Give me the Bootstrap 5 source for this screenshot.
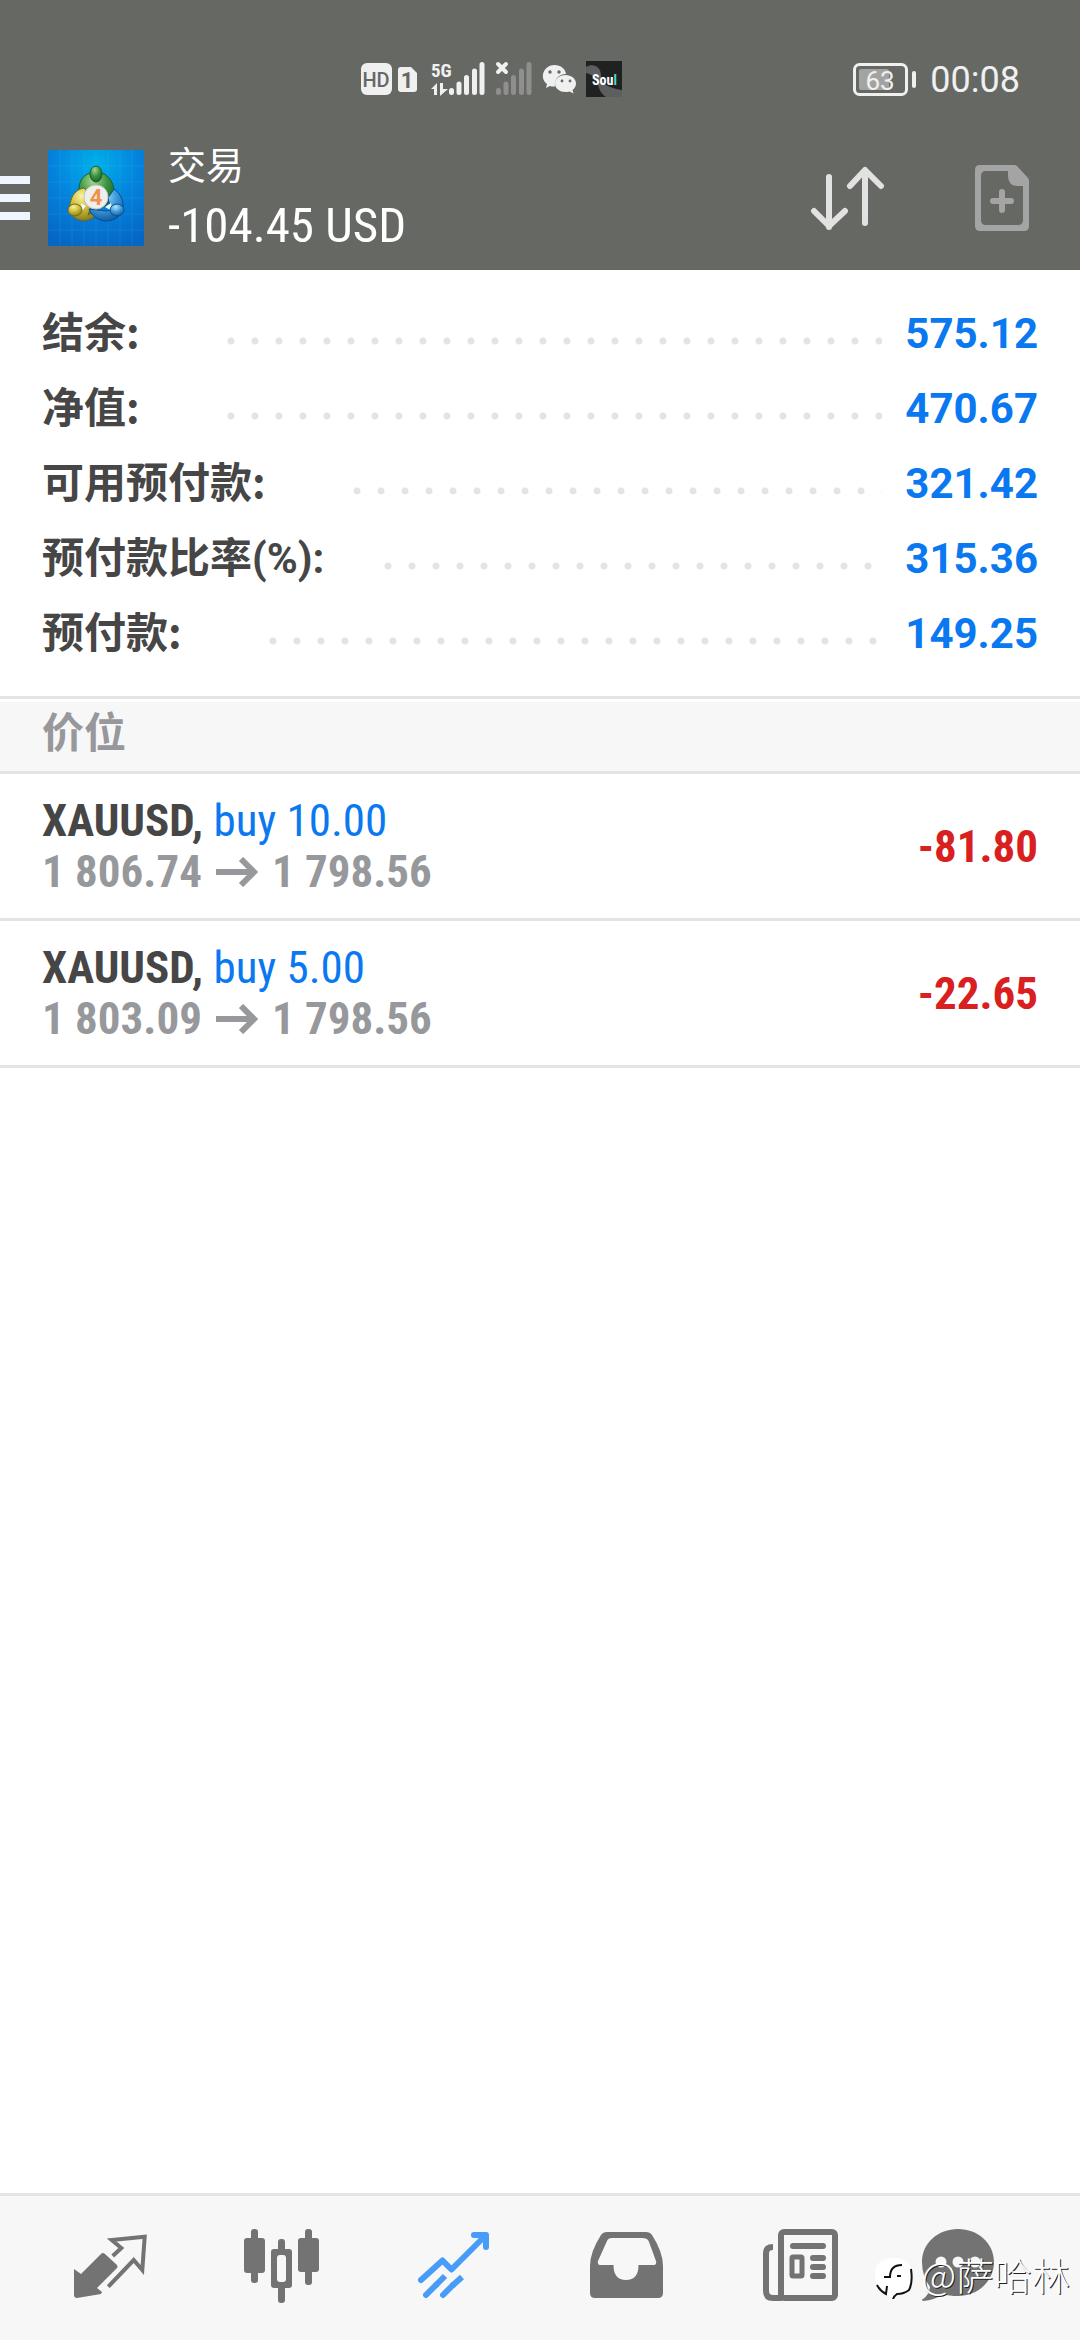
<!DOCTYPE html>
<html lang="zh-CN">
<head>
<meta charset="utf-8">
<meta name="viewport" content="width=device-width, initial-scale=1">
<title>交易</title>
<link href="https://cdn.jsdelivr.net/npm/bootstrap@5.3.0/dist/css/bootstrap.min.css" rel="stylesheet">
<style>
  body { font-family: Roboto, "Noto Sans CJK SC", sans-serif; color: #464646; background: #fff; }
  .narrow { font-family: "Roboto Condensed", "Liberation Sans Narrow", Roboto, "Noto Sans CJK SC", sans-serif; }
  .app-head { background: #666864; color: #fff; }
  .status-bar { height: 120px; padding: 40px 60px 0 340px; color: #f0f0f0; }
  .clock { font-size: 36px; line-height: 80px; }
  .tool-bar { padding: 18px 51px 12px 0; }
  .plain-btn { border: 0; background: none; padding: 0; line-height: 0; }
  .menu-btn { margin-right: 18px; }
  .brand-logo { margin-right: 24px; }
  .head-title { font-size: 38px; line-height: 56px; font-weight: 400; margin: 0; }
  .head-sum { font-size: 49px; line-height: 64px; }
  .head-actions { gap: 90px; }
  .account { padding: 26px 42px 25px; border-bottom: 3px solid #e4e4e4; margin: 0 0 3px; }
  .account-row { font-size: 42px; line-height: 75px; font-weight: 700; }
  .account-row dt { font-family: "Noto Sans CJK SC", sans-serif; line-height: 60px; margin-right: 87px; }
  .account-row.level-row dt { font-family: Roboto, "Noto Sans CJK SC", sans-serif; margin-right: 60px; }
  .account-row dd { margin: 0; color: #0a78f0; }
  .leader { height: 8px; margin: 15px 23px 0 0; background: radial-gradient(circle at 4px 4px, #e4e4e4 3px, transparent 4px) 0 0 / 24px 8px repeat-x; }
  .section-head { background: #f7f7f7; color: #97989c; font-size: 42px; line-height: 56px; font-weight: 700; font-family: "Noto Sans CJK SC", sans-serif; padding: 0 42px 13px; margin: 0; border-bottom: 3px solid #e4e4e4; }
  .deal { padding: 21px 42px; border: 0; border-bottom: 3px solid #e4e4e4; font-size: 45px; line-height: 51px; font-weight: 700; color: #464646; }
  .deal .side { color: #0a78f0; font-weight: 400; }
  .deal .prices { color: #97989c; gap: 14px; }
  .deal .loss { color: #d82020; }
  .tab-bar { background: #f7f7f7; border-top: 3px solid #e4e4e4; height: 147px; color: #737373; }
  .tab-bar a { color: inherit; line-height: 0; }
  .tab-bar a.active { color: #479cf7; }
  .watermark { right: 10px; bottom: 41px; gap: 4px; color: #fff; font: 300 38px/44px "Noto Sans CJK SC", sans-serif; text-shadow: 1px 1px 0 #222; }
</style>
<script src="https://cdn.jsdelivr.net/npm/bootstrap@5.3.0/dist/js/bootstrap.bundle.min.js"></script>
</head>
<body class="d-flex flex-column min-vh-100">

<header class="app-head">
  <div class="status-bar d-flex justify-content-between">
    <svg width="300" height="80" viewBox="0 0 300 80" aria-label="状态">
      <rect x="21" y="23" width="31" height="32" rx="6" fill="#f0f0f0"/>
      <text x="36" y="47" text-anchor="middle" font-family="Roboto" font-weight="500" font-size="20" fill="#666864">HD</text>
      <path d="M61 27h10l6 6v16a3 3 0 0 1-3 3H61a3 3 0 0 1-3-3V30a3 3 0 0 1 3-3z" fill="#f0f0f0"/>
      <text x="67" y="48" text-anchor="middle" font-family="Roboto" font-weight="700" font-size="22" fill="#666864">1</text>
      <text class="narrow" x="91" y="37" font-weight="700" font-size="19" fill="#f0f0f0">5G</text>
      <path d="M91 49l6-6v12h-3v-6zM100 43h3v6h5l-8 7z" fill="#f0f0f0"/>
      <g stroke="#f0f0f0" stroke-width="5" stroke-linecap="round"><path d="M111.500 50.500v2M119 44v8.500M126.500 37.500v15M134.500 31v21.500M142 24.500v28"/></g>
      <path d="M158 24l8 8M166 24l-8 8" stroke="#f0f0f0" stroke-width="4" stroke-linecap="round"/>
      <g stroke="#8f908e" stroke-width="5" stroke-linecap="round"><path d="M158.500 50.500v2M166 44v8.500M173.500 37.500v15M181.500 31v21.500M189 24.500v28"/></g>
      <path d="M214.500 25c6.500 0 11 4 11.500 9-7 0-12 5-11 12.500-2 .3-3.500 0-5-.5l-4 2 1-4c-8-6-3.500-19 7.500-19z" fill="#f0f0f0"/>
      <path d="M225.500 35c6 0 10.500 4 10.500 8.500 0 3-1.500 5-3.500 6.500l1 3.500-4-2c-8 2-14.500-2-14.500-8 0-4.500 4.500-8.500 10.500-8.500z" fill="#f0f0f0"/>
      <g fill="#666864"><circle cx="210" cy="32" r="1.700"/><circle cx="219" cy="32" r="1.700"/><circle cx="222" cy="41" r="1.400"/><circle cx="230" cy="41" r="1.400"/></g>
      <rect x="246" y="21" width="36" height="36" fill="#202222"/>
      <path d="M246 27c7-4 15-1 15 9 0 8 8 12 21 14v7h-16c-11-7-5-21-20-24z" fill="#777978" opacity=".7"/>
      <text class="narrow" x="252" y="45" font-weight="700" font-size="14" fill="#fff">Sou<tspan fill="#46dccb">l</tspan></text>
    </svg>
    <div class="d-flex">
      <svg width="77" height="80" viewBox="0 0 77 80" aria-label="电量">
        <rect x="1.500" y="24.500" width="52" height="30" rx="5" fill="none" stroke="#f0f0f0" stroke-width="3"/>
        <rect x="6" y="29" width="30" height="21" rx="2" fill="#a3a4a2"/>
        <rect x="59" y="31" width="4" height="17" rx="2" fill="#f0f0f0"/>
        <text x="27" y="50" text-anchor="middle" font-family="Roboto" font-size="26" fill="#f0f0f0">63</text>
      </svg>
      <span class="clock">00:08</span>
    </div>
  </div>

  <div class="tool-bar d-flex align-items-center">
    <button class="plain-btn menu-btn" type="button" aria-label="菜单">
      <svg width="30" height="44" viewBox="0 0 30 44"><path d="M0 0h30v8H0zM0 18h30v8H0zM0 36h30v8H0z" fill="#f0f6ff"/></svg>
    </button>
    <svg class="brand-logo" width="96" height="96" viewBox="0 0 96 96" aria-hidden="true">
      <defs>
        <radialGradient id="sky" cx=".5" cy=".15" r=".9"><stop offset="0" stop-color="#00b0ea"/><stop offset=".5" stop-color="#0482dd"/><stop offset="1" stop-color="#0566c4"/></radialGradient>
        <radialGradient id="gr" cx=".4" cy=".25" r=".8"><stop offset="0" stop-color="#a4d692"/><stop offset=".5" stop-color="#3c9440"/><stop offset="1" stop-color="#165e28"/></radialGradient>
        <radialGradient id="ye" cx=".4" cy=".25" r=".8"><stop offset="0" stop-color="#f8f3a0"/><stop offset=".5" stop-color="#cdbb35"/><stop offset="1" stop-color="#82761a"/></radialGradient>
        <radialGradient id="bl" cx=".4" cy=".25" r=".8"><stop offset="0" stop-color="#b5e3fa"/><stop offset=".5" stop-color="#3d9bdc"/><stop offset="1" stop-color="#0c559c"/></radialGradient>
      </defs>
      <rect width="96" height="96" fill="url(#sky)"/>
      <path d="M12 0v96M24 0v96M36 0v96M48 0v96M60 0v96M72 0v96M84 0v96M0 16h96M0 32h96M0 48h96M0 64h96M0 80h96" stroke="#5cc4f5" stroke-width="1" opacity=".15"/>
      <path d="M31 39c0-11 8-17 17-17s17 7 18 18c0 9-6 15-13 18l-5-19-10 2-7 3z" fill="url(#gr)" stroke="#17622b"/>
      <path d="M36 38l10 11-6 16 11-6c-2 10-13 14-22 10-7-3-9-10-6-19 2-7 7-11 13-12z" fill="url(#ye)" stroke="#6f6a16"/>
      <path d="M66 39c7 5 10 12 9 20-2 8-9 12-18 12-8-1-14-6-16-12l17 2 5-1-3-12z" fill="url(#bl)" stroke="#0c4e91"/>
      <path d="M57 57l6-4 1 8zM38 56l-5-3 1 8z" fill="#eef8ff"/>
      <ellipse cx="48" cy="24" rx="6" ry="8" fill="url(#gr)" stroke="#175f29"/>
      <ellipse cx="27" cy="60" rx="7" ry="6" fill="url(#ye)" stroke="#756c18"/>
      <ellipse cx="69" cy="60" rx="7" ry="6" fill="url(#bl)" stroke="#0c4e91"/>
      <circle cx="48" cy="47" r="12" fill="#eeeeed" stroke="#c6c6c6"/>
      <text x="48" y="55" text-anchor="middle" font-family="Roboto" font-size="22" font-weight="700" fill="#f0924b">4</text>
    </svg>
    <div class="flex-grow-1">
      <h1 class="head-title">交易</h1>
      <div class="head-sum narrow">-104.45 USD</div>
    </div>
    <div class="head-actions d-flex">
      <button class="plain-btn" type="button" aria-label="排序">
        <svg width="76" height="66" viewBox="0 0 76 66" fill="none" stroke="#e2e2e2" stroke-width="6" stroke-linecap="round" stroke-linejoin="round"><path d="M20 12v50M5 46l15 15 16-15M56 58V6M41 21L56 5l16 16"/></svg>
      </button>
      <button class="plain-btn" type="button" aria-label="新订单">
        <svg width="54" height="66" viewBox="0 0 54 66"><path fill="#a4a4a4" fill-rule="evenodd" d="M5 0h34q2 0 3 1l11 12q1 1 1 3v45q0 5-5 5H5q-5 0-5-5V5q0-5 5-5zM11 6q-5 0-5 5v44q0 5 5 5h32q5 0 5-5V21h-5q-10 0-10-10V6z"/><path d="M27 27v18M18 36h18" stroke="#a4a4a4" stroke-width="6" stroke-linecap="round"/></svg>
      </button>
    </div>
  </div>
</header>

<main class="flex-grow-1">
  <dl class="account">
    <div class="account-row d-flex align-items-baseline"><dt>结余:</dt><span class="leader flex-grow-1 align-self-center"></span><dd>575.12</dd></div>
    <div class="account-row d-flex align-items-baseline"><dt>净值:</dt><span class="leader flex-grow-1 align-self-center"></span><dd>470.67</dd></div>
    <div class="account-row d-flex align-items-baseline"><dt>可用预付款:</dt><span class="leader flex-grow-1 align-self-center"></span><dd>321.42</dd></div>
    <div class="account-row level-row d-flex align-items-baseline"><dt>预付款比率(%):</dt><span class="leader flex-grow-1 align-self-center"></span><dd>315.36</dd></div>
    <div class="account-row d-flex align-items-baseline"><dt>预付款:</dt><span class="leader flex-grow-1 align-self-center"></span><dd>149.25</dd></div>
  </dl>

  <h2 class="section-head">价位</h2>
  <ul class="list-group rounded-0 narrow">
    <li class="list-group-item deal d-flex justify-content-between align-items-center">
      <div>
        <div>XAUUSD, <span class="side">buy 10.00</span></div>
        <div class="prices d-flex align-items-center"><span>1 806.74</span><svg width="42" height="30" viewBox="0 0 42 30" fill="none" stroke="currentColor" stroke-width="6" aria-label="至"><path d="M0 15h38M25 2l13 13-13 13"/></svg><span>1 798.56</span></div>
      </div>
      <span class="loss">-81.80</span>
    </li>
    <li class="list-group-item deal d-flex justify-content-between align-items-center">
      <div>
        <div>XAUUSD, <span class="side">buy 5.00</span></div>
        <div class="prices d-flex align-items-center"><span>1 803.09</span><svg width="42" height="30" viewBox="0 0 42 30" fill="none" stroke="currentColor" stroke-width="6" aria-label="至"><path d="M0 15h38M25 2l13 13-13 13"/></svg><span>1 798.56</span></div>
      </div>
      <span class="loss">-22.65</span>
    </li>
  </ul>
</main>

<nav class="tab-bar nav nav-fill flex-nowrap align-items-center px-4 position-relative" aria-label="主导航">
  <a class="nav-item" href="#quotes" aria-label="行情">
    <svg width="96" height="96" viewBox="0 0 96 96"><path fill="currentColor" d="M12 49l7 5 20-20q2-2 4 0l12 11q1 2 0 3L35 68l5 4-1 2-24 4q-3 0-3-3z"/><path d="M50.700 36l8.600-8-9.600-8 33-3.300L80.300 50l-8.600-10-25.400 26.700" fill="none" stroke="currentColor" stroke-width="4"/></svg>
  </a>
  <a class="nav-item" href="#chart" aria-label="图表">
    <svg width="96" height="96" viewBox="0 0 96 96" fill="currentColor"><rect x="10" y="18" width="21" height="35" rx="3"/><rect x="17" y="9" width="7" height="54" rx="3"/><rect x="64" y="18" width="21" height="34" rx="3"/><rect x="71" y="9" width="7" height="56" rx="3"/><rect x="37" y="29" width="21" height="39" rx="3"/><rect x="44" y="19" width="7" height="64" rx="3"/><rect x="43" y="35" width="9" height="27" rx="3" fill="#f7f7f7"/></svg>
  </a>
  <a class="nav-item active" href="#trade" aria-label="交易" aria-current="page">
    <svg width="96" height="96" viewBox="0 0 96 96" fill="none" stroke="currentColor" stroke-width="6" stroke-linecap="round" stroke-linejoin="round"><path d="M15 60l21.500-19.500 9 9L79 16M68 15h12v12M20 75l10-10M37 75l10-10"/><path stroke-linecap="butt" d="M29 66l10-10M46 66l10-9"/></svg>
  </a>
  <a class="nav-item" href="#history" aria-label="历史">
    <svg width="96" height="96" viewBox="0 0 96 96"><path fill="currentColor" fill-rule="evenodd" d="M29 12h39q4 0 6 3 11 17 11 31v27q0 5-5 5H17q-5 0-5-5V46q0-14 11-31 2-3 6-3zM34 18q-4 0-5 3l-9 20q-1 4 3 4h12.500q0 15 12.500 15t12.500-15H75q4 0 3-4l-7-19q-1-4-7-4z"/></svg>
  </a>
  <a class="nav-item" href="#news" aria-label="新闻">
    <svg width="96" height="96" viewBox="0 0 96 96" fill="none" stroke="currentColor" stroke-width="6" stroke-linecap="round"><rect x="31" y="12" width="54" height="66" rx="3"/><path stroke-linecap="butt" d="M23 27q-7 0-7 6v38q0 7 7 7h9"/><path d="M43 26h30M63 38h10M63 47h10M63 56h10"/><rect x="42" y="37" width="10" height="19" rx="1" stroke-width="5"/></svg>
  </a>
  <a class="nav-item" href="#chat" aria-label="消息">
    <svg width="96" height="96" viewBox="0 0 96 96"><path fill="currentColor" d="M36 9c20 0 36 14 36 33S56 76 36 76q-9 0-15-2-8 6-20 7-2-1 0-2 6-4 7-12Q0 56 0 42C0 23 16 9 36 9z"/><g fill="#f7f7f7"><circle cx="19" cy="42" r="5.500"/><circle cx="36" cy="42" r="5.500"/><circle cx="53" cy="42" r="5.500"/></g></svg>
  </a>
  <div class="watermark position-absolute d-flex align-items-center">
    <svg width="42" height="50" viewBox="0 0 42 50" aria-hidden="true"><path d="M11 45Q0 38 0 26 0 9 19 9q18 0 18 17 0 16-8 18-7 0-11 5z" fill="#fff"/><path d="M2 36q3 6 9 9l1-8M36 20q2 14-2 21-5 4-12 4-3 2-4 5M9 28h6q0-12 12-12M22 27h4" fill="none" stroke="#111" stroke-width="2"/></svg>
    <span>@萨哈林</span>
  </div>
</nav>
</body>
</html>
